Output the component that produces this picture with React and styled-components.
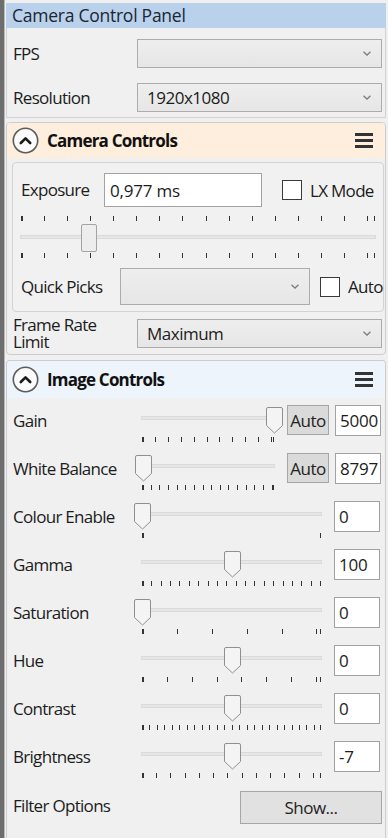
import React from "react";
import styled, { createGlobalStyle } from "styled-components";

const GlobalStyle = createGlobalStyle`
  * { box-sizing: border-box; }
  html, body { margin: 0; padding: 0; background: #f0f0f0; }
  body {
    font-family: "Open Sans", "Noto Sans", "Liberation Sans", sans-serif;
    font-size: 17px;
    color: #1c1c1c;
  }
`;

const Window = styled.div`
  width: 388px;
  height: 838px;
  display: flex;
  overflow: hidden;
  background: #f0f0f0;
`;

const Chrome = styled.div`
  width: 5px;
  flex: none;
  background: #6e6e6e;
  border-right: 1px solid #b9b9b9;
`;

const Panel = styled.div`
  flex: 1;
  min-width: 0;
  display: flex;
  flex-direction: column;
  padding: 3px 2px 0 1px;
`;

const TitleBar = styled.div`
  height: 25px;
  line-height: 25px;
  padding-left: 6px;
  background: #b9d1ea;
  color: #1b2633;
  font-size: 17.5px;
  letter-spacing: -0.25px;
`;

const TopFields = styled.div`
  display: flex;
  flex-direction: column;
  gap: 15px;
  padding: 11px 3px 5px 6px;
  border: 1px solid #d2d2d2;
  border-top: none;
`;

const FieldRow = styled.div`
  display: flex;
  align-items: center;
  height: ${(p) => p.$h || 29}px;
  padding: ${(p) => p.$pad || "0"};
`;

const FieldLabel = styled.div`
  width: ${(p) => p.$w}px;
  flex: none;
  line-height: ${(p) => p.$lh || 20}px;
  letter-spacing: -0.7px;
  white-space: nowrap;
`;

const ComboBox = styled.div`
  flex: ${(p) => (p.$w ? "none" : "1")};
  width: ${(p) => (p.$w ? `${p.$w}px` : "auto")};
  height: ${(p) => p.$h || 29}px;
  display: flex;
  align-items: center;
  padding: 0 10px 0 9px;
  background: linear-gradient(#eeeeee, #e6e6e6);
  border: 1px solid #acacac;
  letter-spacing: -0.5px;
  span {
    flex: 1;
  }
`;

const Section = styled.div`
  margin-top: ${(p) => p.$mt}px;
  border: 1px solid #cdcdcd;
  border-radius: 4px;
  background: #f0f0f0;
  ${(p) => p.$open && "border-bottom: none; border-bottom-left-radius: 0; border-bottom-right-radius: 0; flex: 1;"}
`;

const SectionHeader = styled.div`
  height: ${(p) => p.$h}px;
  display: flex;
  align-items: center;
  padding: 0 12px 0 5px;
  background: ${(p) => p.$bg};
  border-radius: 3px 3px 0 0;
`;

const SectionTitle = styled.div`
  margin-left: 8px;
  font-weight: 700;
  font-size: 17px;
  letter-spacing: -0.8px;
  color: #111;
`;

const MenuIcon = styled.div`
  margin-left: auto;
  width: 18px;
  display: flex;
  flex-direction: column;
  gap: 3px;
  i {
    display: block;
    height: 3px;
    background: #333;
  }
`;

const GroupBox = styled.div`
  margin: 4px 1px 0 5px;
  padding: 10px 0 6px 0;
  border: 1px solid #d3d3d3;
  border-radius: 4px;
  background: #f1f1f1;
`;

const TextInput = styled.div`
  width: ${(p) => p.$w}px;
  height: ${(p) => p.$h}px;
  flex: none;
  display: flex;
  align-items: center;
  padding-left: ${(p) => p.$pl || 4}px;
  margin-left: ${(p) => p.$ml || 0}px;
  margin-top: ${(p) => p.$mt || 0}px;
  background: #fff;
  border: 1px solid #a2a2a2;
  letter-spacing: -0.2px;
`;

const CheckBox = styled.div`
  width: 20px;
  height: 20px;
  flex: none;
  margin-left: ${(p) => p.$ml}px;
  background: #fff;
  border: 1px solid #3a3a3a;
`;

const CheckLabel = styled.div`
  margin-left: 8px;
  white-space: nowrap;
  letter-spacing: -0.7px;
`;

const SliderBox = styled.div`
  position: relative;
  width: ${(p) => (p.$w ? `${p.$w}px` : "auto")};
  flex: none;
  height: ${(p) => p.$h}px;
  padding-top: ${(p) => p.$pt}px;
  margin-top: ${(p) => p.$mt || 0}px;
`;

const Track = styled.div`
  height: 4px;
  margin: ${(p) => p.$mt}px 7px 0 7px;
  background: #e6e6e6;
  border: 1px solid #dadada;
`;

const TickRow = styled.div`
  position: relative;
  height: 5px;
  margin: ${(p) => p.$mt}px 8px 0 8px;
`;

const Tick = styled.i`
  position: absolute;
  top: 0;
  width: ${(p) => (p.$bold ? 2 : 1)}px;
  height: 5px;
  background: #333;
`;

const RectThumb = styled.div`
  position: absolute;
  top: ${(p) => p.$top}px;
  width: 16px;
  height: 28px;
  background: #ededed;
  border: 1px solid #a3a3a3;
  border-radius: 2px;
`;

const PointerThumb = styled.svg`
  position: absolute;
  top: ${(p) => p.$top}px;
  width: 17px;
  height: 27px;
`;

const ImageRow = styled.div`
  display: flex;
  align-items: flex-start;
  height: 48px;
  padding: 0 3px 0 6px;
`;

const RowLabel = styled.div`
  width: 121px;
  flex: none;
  margin-top: ${(p) => p.$mt || 12}px;
  line-height: 20px;
  letter-spacing: -0.7px;
  white-space: nowrap;
`;

const PushButton = styled.div`
  width: ${(p) => p.$w}px;
  height: ${(p) => p.$h}px;
  flex: none;
  display: flex;
  align-items: center;
  justify-content: center;
  margin-left: ${(p) => (p.$auto ? "auto" : `${p.$ml}px`)};
  margin-top: ${(p) => p.$mt}px;
  background: ${(p) => p.$bg};
  border: 1px solid #a6a6a6;
  color: #222;
  letter-spacing: -0.5px;
`;

const ImageBody = styled.div`
  padding-top: 1px;
`;

function Chevron() {
  return (
    <svg width="8" height="5" viewBox="0 0 8 5">
      <polyline points="0.5,0.8 4,4 7.5,0.8" fill="none" stroke="#7d7d7d" strokeWidth="1.3" />
    </svg>
  );
}

function CollapseIcon() {
  return (
    <svg width="27" height="27" viewBox="0 0 27 27">
      <circle cx="13.5" cy="13.5" r="12.2" fill="#fbfbfb" stroke="#5c5c5c" strokeWidth="1.6" />
      <polyline points="8.8,16 13.5,11.3 18.2,16" fill="none" stroke="#1a1a1a" strokeWidth="2.6" strokeLinejoin="round" strokeLinecap="round" />
    </svg>
  );
}

function Combo({ value, w, h }) {
  return (
    <ComboBox $w={w} $h={h}>
      <span>{value}</span>
      <Chevron />
    </ComboBox>
  );
}

function makeTicks(step) {
  const list = [];
  for (let i = 0; i * step <= 1.0001; i++) list.push(i * step);
  if (1 - list[list.length - 1] > 0.005) list.push(1);
  return list;
}

function Ticks({ ticks, mt }) {
  return (
    <TickRow $mt={mt}>
      {ticks.map((t, i) => (
        <Tick key={i} $bold={i === 0} style={{ left: `calc(${t * 100}% - ${t}px)` }} />
      ))}
    </TickRow>
  );
}

// left edge of a 16px-wide thumb whose centre sits on the tick range (inset 8px)
function thumbLeft(value) {
  return `calc(${value * 100}% - ${value * 16}px)`;
}

function Slider({ w, value, step }) {
  const ticks = makeTicks(step);
  return (
    <SliderBox $w={w} $h={48} $pt={0}>
      <Track $mt={17} />
      <Ticks ticks={ticks} mt={17} />
      <PointerThumb $top={8} viewBox="0 0 17 27" style={{ left: thumbLeft(value) }}>
        <path
          d="M2 0.5 H15 Q16.5 0.5 16.5 2 V18.5 L8.5 26 L0.5 18.5 V2 Q0.5 0.5 2 0.5 Z"
          fill="#f4f4f4"
          stroke="#8f8f8f"
        />
      </PointerThumb>
    </SliderBox>
  );
}

function ExposureSlider({ value }) {
  const ticks = makeTicks(23 / 352);
  return (
    <SliderBox $h={52} $pt={6} $mt={3}>
      <Ticks ticks={ticks} mt={0} />
      <Track $mt={14} />
      <Ticks ticks={ticks} mt={14} />
      <RectThumb $top={14} style={{ left: thumbLeft(value) }} />
    </SliderBox>
  );
}

const imageRows = [
  { label: "Gain", value: 1, step: 0.0985, auto: true, text: "5000" },
  { label: "White Balance", value: 0.01, step: 0.066, auto: true, text: "8797" },
  { label: "Colour Enable", value: 0, step: 1, text: "0" },
  { label: "Gamma", value: 0.5, step: 1 / 19, text: "100" },
  { label: "Saturation", value: 0, step: 0.196, text: "0" },
  { label: "Hue", value: 0.5, step: 0.1397, text: "0" },
  { label: "Contrast", value: 0.5, step: 0.042, text: "0" },
  { label: "Brightness", value: 0.5, step: 0.08, text: "-7" },
];

export default function App() {
  return (
    <>
      <GlobalStyle />
      <Window>
        <Chrome />
        <Panel>
          <TitleBar>Camera Control Panel</TitleBar>
          <TopFields>
            <FieldRow>
              <FieldLabel $w={124}>FPS</FieldLabel>
              <Combo value="" />
            </FieldRow>
            <FieldRow>
              <FieldLabel $w={124}>Resolution</FieldLabel>
              <Combo value="1920x1080" />
            </FieldRow>
          </TopFields>

          <Section $mt={4}>
            <SectionHeader $h={35} $bg="#fdeedd">
              <CollapseIcon />
              <SectionTitle>Camera Controls</SectionTitle>
              <MenuIcon>
                <i />
                <i />
                <i />
              </MenuIcon>
            </SectionHeader>
            <GroupBox>
              <FieldRow $h={34} $pad="0 0 0 8px">
                <FieldLabel $w={83}>Exposure</FieldLabel>
                <TextInput $w={158} $h={34} $pl={5}>0,977 ms</TextInput>
                <CheckBox $ml={20} />
                <CheckLabel>LX Mode</CheckLabel>
              </FieldRow>
              <ExposureSlider value={0.193} />
              <FieldRow $h={37} $pad="0 0 0 8px" style={{ marginTop: 6 }}>
                <FieldLabel $w={99}>Quick Picks</FieldLabel>
                <Combo value="" w={190} h={37} />
                <CheckBox $ml={10} />
                <CheckLabel>Auto</CheckLabel>
              </FieldRow>
            </GroupBox>
            <FieldRow $h={42} $pad="0 3px 0 6px">
              <FieldLabel $w={124} $lh={17}>
                Frame Rate
                <br />
                Limit
              </FieldLabel>
              <Combo value="Maximum" />
            </FieldRow>
          </Section>

          <Section $mt={5} $open>
            <SectionHeader $h={37} $bg="#edf4fc">
              <CollapseIcon />
              <SectionTitle>Image Controls</SectionTitle>
              <MenuIcon>
                <i />
                <i />
                <i />
              </MenuIcon>
            </SectionHeader>
            <ImageBody>
              {imageRows.map((r) => (
                <ImageRow key={r.label}>
                  <RowLabel>{r.label}</RowLabel>
                  <Slider w={r.auto ? 148 : 195} value={r.value} step={r.step} />
                  {r.auto && (
                    <PushButton $w={42} $h={30} $ml={5} $mt={6} $bg="#dadada">
                      Auto
                    </PushButton>
                  )}
                  <TextInput $w={46} $h={31} $ml={r.auto ? 6 : 5} $mt={6}>
                    {r.text}
                  </TextInput>
                </ImageRow>
              ))}
              <ImageRow>
                <RowLabel $mt={13}>Filter Options</RowLabel>
                <PushButton $w={142} $h={33} $auto $mt={8} $bg="#e1e1e1">
                  Show...
                </PushButton>
              </ImageRow>
            </ImageBody>
          </Section>
        </Panel>
      </Window>
    </>
  );
}
